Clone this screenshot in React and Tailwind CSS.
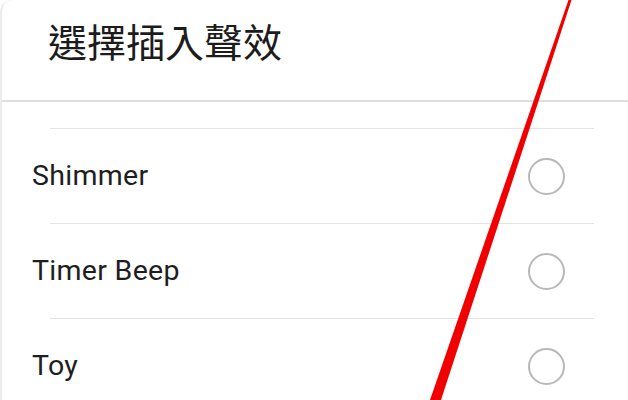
import React from "react";

const sounds = ["", "Shimmer", "Timer Beep", "Toy"];

function SoundRow({ name }) {
  return (
    <div className="relative h-[95px] flex items-center justify-between pl-[30px] pr-[63px]">
      <span className="text-[28.5px] text-[#1e1e1e] tracking-[0.3px]">{name}</span>
      <span className="w-[37px] h-[37px] rounded-full border-2 border-[#b8b8b8]" />
      <div className="absolute bottom-0 left-12 right-[34px] h-px bg-[#e4e4e4]" />
    </div>
  );
}

export default function App() {
  return (
    <div
      className="relative w-[628px] h-[400px] overflow-hidden bg-white"
      style={{ fontFamily: "Roboto, 'Noto Sans CJK TC', sans-serif" }}
    >
      <div className="h-full flex flex-col border-l-2 border-[#ececec] rounded-tl-xl">
        {/* header */}
        <div className="h-[102px] shrink-0 flex items-center pl-[46px] border-b-2 border-[#dedede]">
          <h1 className="text-[39px] leading-none text-[#1c1c1c] -mt-[12px]">選擇插入聲效</h1>
        </div>

        {/* list, scrolled a bit */}
        <div className="flex-1 overflow-hidden">
          <div className="-mt-[68px]">
            {sounds.map((s, i) => (
              <SoundRow key={i} name={s} />
            ))}
          </div>
        </div>
      </div>

      {/* red mark drawn over the screen */}
      <svg className="absolute inset-0 pointer-events-none" width="628" height="400" viewBox="0 0 628 400">
        <polygon points="568.5,0 571.5,0 441,400 430,400" fill="#f00000" />
      </svg>
    </div>
  );
}
